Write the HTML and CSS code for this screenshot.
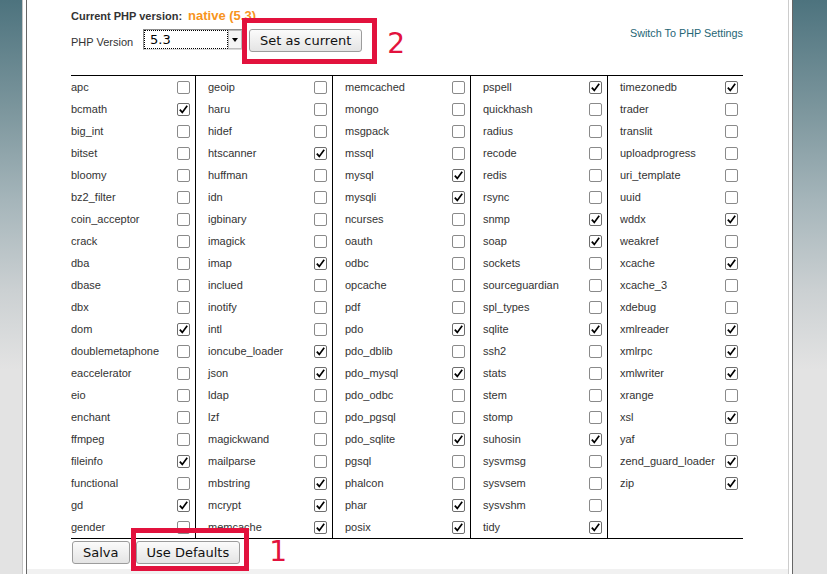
FILE: index.html
```html
<!DOCTYPE html>
<html lang="en">
<head>
    <meta charset="UTF-8">
    <meta name="viewport" content="width=device-width, initial-scale=1.0">
    <title>PHP Selector - Extensions</title>
    <link rel="stylesheet" href="styles.css">
</head>
<body>
    <div class="frame">
        <div class="panel">
            <div class="current">
                Current PHP version: <span class="native">native (5.3)</span>
            </div>

            <div class="version-row">
                <label class="version-label">PHP Version</label>
                <div class="select">
                    <span class="select-value">5.3</span>
                    <span class="select-arrow"></span>
                </div>
                <span class="marked marked-top">
                    <button class="btn">Set as current</button>
                    <span class="callout callout-top"><span class="callout-num">2</span></span>
                </span>
                <a href="#" class="switch-link">Switch To PHP Settings</a>
            </div>

            <div id="extensions" class="extensions"></div>

            <div class="actions">
                <button class="btn">Salva</button>
                <span class="marked marked-bottom">
                    <button class="btn">Use Defaults</button>
                    <span class="callout callout-bottom"><span class="callout-num">1</span></span>
                </span>
            </div>

            <div class="footer-band"></div>
        </div>
    </div>

    <script>
        // a trailing * means the extension is enabled
        const columns = [
            'apc bcmath* big_int bitset bloomy bz2_filter coin_acceptor crack dba dbase dbx dom* doublemetaphone eaccelerator eio enchant ffmpeg fileinfo* functional gd* gender',
            'geoip haru hidef htscanner* huffman idn igbinary imagick imap* inclued inotify intl ioncube_loader* json* ldap lzf magickwand mailparse mbstring* mcrypt* memcache*',
            'memcached mongo msgpack mssql mysql* mysqli* ncurses oauth odbc opcache pdf pdo* pdo_dblib pdo_mysql* pdo_odbc pdo_pgsql pdo_sqlite* pgsql phalcon phar* posix*',
            'pspell* quickhash radius recode redis rsync snmp* soap* sockets sourceguardian spl_types sqlite* ssh2 stats stem stomp suhosin* sysvmsg sysvsem sysvshm tidy*',
            'timezonedb* trader translit uploadprogress uri_template uuid wddx* weakref xcache* xcache_3 xdebug xmlreader* xmlrpc* xmlwriter* xrange xsl* yaf zend_guard_loader* zip*'
        ];

        const checkSvg = '<svg viewBox="0 0 11 11" width="11" height="11"><path d="M1.8 5.6 L4.3 8.4 L9.2 1.8" fill="none" stroke="#000" stroke-width="1.7"/></svg>';
        const container = document.getElementById('extensions');

        columns.forEach(list => {
            const col = document.createElement('div');
            col.classList.add('ext-col');
            list.split(' ').forEach(item => {
                const enabled = item.endsWith('*');
                const name = item.replace('*', '');
                const row = document.createElement('div');
                row.classList.add('ext-row');
                row.innerHTML = `<span class="ext-name">${name}</span>` +
                    `<span class="check${enabled ? ' checked' : ''}">${enabled ? checkSvg : ''}</span>`;
                col.appendChild(row);
            });
            container.appendChild(col);
        });
    </script>
</body>
</html>
```

FILE: styles.css
```css
html, body {
    height: 100%;
}

body {
    margin: 0;
    overflow: hidden;
    font-family: "Liberation Sans", Arial, sans-serif;
    color: #333;
    background: linear-gradient(#4d737e 0, #7c969d 110px, #a5b5ba 200px, #cbd0d2 290px, #e3e3e3 370px, #e3e3e3 100%);
}

.frame {
    box-sizing: border-box;
    width: 771px;
    height: 574px;
    margin-left: 22px;
    padding: 0 3px;
    background: #fff;
    border-left: 1px solid #c4c4c4;
    border-right: 1px solid #666;
}

.panel {
    box-sizing: border-box;
    height: 100%;
    padding: 7px 45px 0 44px;
    border-left: 1px solid #666;
    border-right: 1px solid #ccc;
    display: flex;
    flex-direction: column;
}

.current {
    font-size: 11px;
    font-weight: bold;
    line-height: 17px;
}

.native {
    margin-left: 3px;
    font-size: 13px;
    color: #f7941d;
}

.version-row {
    display: flex;
    align-items: flex-start;
    margin-top: 4px;
    height: 23px;
}

.version-label {
    width: 72px;
    margin-top: 7px;
    font-size: 11px;
    line-height: 13px;
}

/* old GTK style combo box */
.select {
    box-sizing: border-box;
    width: 100px;
    height: 21px;
    display: flex;
    border: 1px solid #8c8c8c;
    border-right-color: #d8d8d8;
    border-bottom-color: #d8d8d8;
    background: #fff;
}

.select-value {
    flex: 1;
    padding-left: 5px;
    border: 1px dotted #000;
    font-family: "DejaVu Sans", sans-serif;
    font-size: 13px;
    line-height: 17px;
    color: #000;
}

.select-arrow {
    width: 12px;
    position: relative;
    border: 1px solid #bbb;
    background: #f4f4f4;
}

.select-arrow::after {
    content: "";
    position: absolute;
    left: 3px;
    top: 7px;
    border-left: 3px solid transparent;
    border-right: 3px solid transparent;
    border-top: 4px solid #000;
}

.btn {
    box-sizing: border-box;
    height: 23px;
    padding: 0 10px;
    font-family: "DejaVu Sans", sans-serif;
    font-size: 13px;
    color: #111;
    background: linear-gradient(#fbfbfb, #e4e4e4);
    border: 1px solid #9c9c9c;
    border-radius: 3px;
}

.marked {
    position: relative;
}

.marked-top {
    margin-left: 6px;
}

.callout {
    position: absolute;
    border: 5px solid #e2123d;
    z-index: 2;
}

.callout-top {
    left: -7px;
    right: -15px;
    top: -11px;
    bottom: -12px;
}

.callout-bottom {
    left: -5px;
    right: -9px;
    top: -13px;
    bottom: -7px;
}

.callout-num {
    position: absolute;
    font-family: "DejaVu Sans", sans-serif;
    font-size: 28px;
    line-height: 28px;
    color: #e2123d;
}

.callout-top .callout-num {
    left: calc(100% + 15px);
    top: 7px;
}

.callout-bottom .callout-num {
    left: calc(100% + 25px);
    top: 5px;
}

.switch-link {
    margin-left: auto;
    margin-top: -1px;
    font-size: 10.8px;
    line-height: 10px;
    color: #266675;
    text-decoration: none;
}

.extensions {
    display: grid;
    grid-template-columns: 124px 137px 138px 137px 136px;
    margin-top: 23px;
    border-top: 1px solid #000;
    border-bottom: 1px solid #000;
}

.ext-col + .ext-col {
    border-left: 1px solid #000;
}

.ext-row {
    height: 22px;
    display: flex;
    align-items: center;
    justify-content: space-between;
    padding: 0 5px 0 12px;
}

.ext-col:first-child .ext-row {
    padding-left: 0;
}

.ext-name {
    font-size: 11px;
}

.check {
    box-sizing: border-box;
    width: 13px;
    height: 13px;
    border: 1px solid #8a8a8a;
    border-radius: 2px;
    background: #fff;
    display: flex;
    align-items: center;
    justify-content: center;
}

.check.checked {
    border-color: #6e6e6e;
}

.actions {
    display: flex;
    gap: 6px;
    margin-top: 2px;
    padding-left: 1px;
}

.footer-band {
    margin: auto -45px 0 -44px;
    height: 5px;
    background: #f1f1f1;
}
```
